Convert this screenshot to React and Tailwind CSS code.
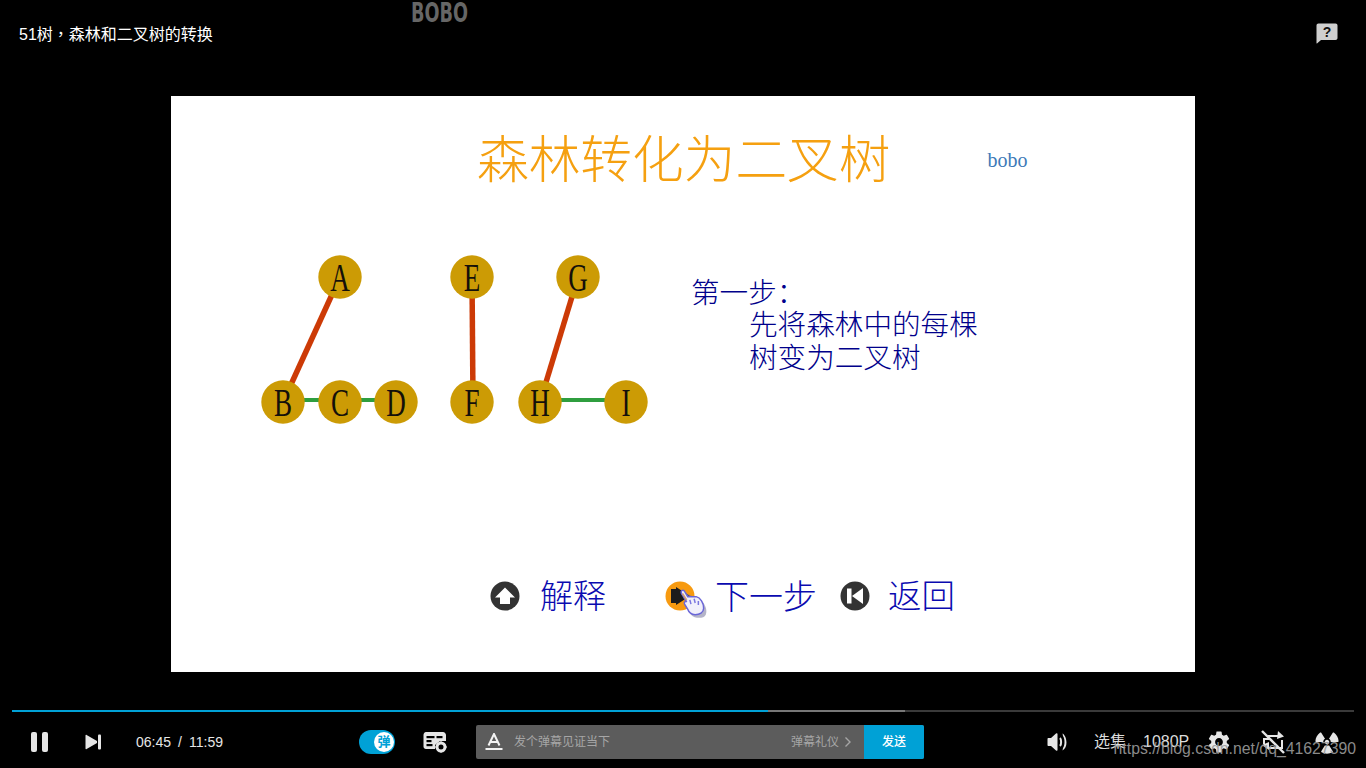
import React from "react";
import { FaRadiation } from "react-icons/fa";
import { MdSettings } from "react-icons/md";

const nodes = [
  { label: "A", x: 90, y: 27 },
  { label: "B", x: 33, y: 152 },
  { label: "C", x: 90, y: 152 },
  { label: "D", x: 146, y: 152 },
  { label: "E", x: 222, y: 27 },
  { label: "F", x: 222, y: 152 },
  { label: "G", x: 328, y: 27 },
  { label: "H", x: 290, y: 152 },
  { label: "I", x: 376, y: 152 },
];

const TreeDiagram = () => (
  <svg width="400" height="180" className="shrink-0">
    <g stroke="#cc3a06" strokeWidth="5.5">
      <line x1="90" y1="27" x2="33" y2="152" />
      <line x1="222" y1="27" x2="223" y2="152" />
      <line x1="328" y1="27" x2="290" y2="152" />
    </g>
    <g stroke="#2f9e3f" strokeWidth="4">
      <line x1="33" y1="150" x2="146" y2="150" />
      <line x1="290" y1="150" x2="376" y2="150" />
    </g>
    {nodes.map((n) => (
      <g key={n.label}>
        <circle cx={n.x} cy={n.y} r="21.7" fill="#cc9b05" />
        <text
          transform={`translate(${n.x} ${n.y + 14}) scale(0.66 1)`}
          textAnchor="middle"
          fontSize="41"
          fontFamily="'Liberation Serif', serif"
          fill="#14100a"
        >
          {n.label}
        </text>
      </g>
    ))}
  </svg>
);

const UpButton = () => (
  <svg width="30" height="30" viewBox="0 0 30 30" className="shrink-0">
    <circle cx="15" cy="15" r="14.5" fill="#333" />
    <path d="M15 6.5 L25 16.5 H20 V23 H10 V16.5 H5 Z" fill="#fff" />
  </svg>
);

const BackButton = () => (
  <svg width="30" height="30" viewBox="0 0 30 30" className="shrink-0">
    <circle cx="15" cy="15" r="14.5" fill="#333" />
    <rect x="7" y="7.5" width="4.5" height="15" fill="#fff" />
    <path d="M23 7 V23 L12 15 Z" fill="#fff" />
  </svg>
);

// orange play button with the hand cursor lying over it
const NextButton = () => (
  <div className="relative w-[30px] h-[30px] shrink-0">
    <svg width="30" height="30" viewBox="0 0 30 30">
      <circle cx="15" cy="15" r="14.5" fill="#f79a10" />
      <rect x="6" y="8" width="6" height="14" fill="#1c1c1c" />
      <path d="M11 6 L25 15 L11 24 Z" fill="#1c1c1c" />
    </svg>
    <svg width="36" height="36" viewBox="0 0 34 34" className="absolute left-[9px] top-[4px]">
      <path
        d="M9 12 C10 15 13 24 16 28 C20 32 28 32 30 28 C32 24 29 17 25 14 L14 9 C11 8 8 9 9 12 Z"
        fill="#77779a"
        opacity="0.55"
      />
      <path
        d="M7 8 C6 5 9 4 10 6 L13 11 L21 11 C25 12 28 17 28 22 C28 26 24 28 20 28 C16 28 14 26 13 23 L10 18 C9 16 11 15 12 16 Z"
        fill="#f1f0fb"
        stroke="#6a66d8"
        strokeWidth="1.4"
      />
      <path d="M15 14 L16 18 M19 13 L20 17 M23 15 L23 19" stroke="#7a76e0" strokeWidth="1.4" />
      <path d="M8 8 L12 14" stroke="#d9a070" strokeWidth="1.5" />
    </svg>
  </div>
);

const NextTrackIcon = () => (
  <svg width="16" height="16" viewBox="0 0 16 16">
    <path d="M0.5 1.5 C0.5 0.8 1 0.6 1.6 1 L12 7 V9 L1.6 15 C1 15.4 0.5 15.2 0.5 14.5 Z" fill="#e6e6e6" />
    <rect x="13" y="0.5" width="3" height="15" rx="1" fill="#e6e6e6" />
  </svg>
);

const DanmakuSettingIcon = () => (
  <svg width="25" height="22" viewBox="0 0 25 22">
    <path
      d="M3 1 H20 C21.5 1 23 2.5 23 4 V10 H17 L12 14 V18 H3 C1.5 18 0.5 17 0.5 15.5 V4 C0.5 2.5 1.5 1 3 1 Z"
      fill="#e6e6e6"
    />
    <g fill="#000">
      <rect x="3.5" y="5" width="8" height="2.2" />
      <rect x="3.5" y="9" width="5" height="2.2" />
      <rect x="3.5" y="13" width="6" height="2.2" />
      <rect x="13.5" y="5" width="6" height="2.2" />
    </g>
    <circle cx="18" cy="16" r="4" fill="none" stroke="#e6e6e6" strokeWidth="3" />
    <g stroke="#e6e6e6" strokeWidth="2">
      <line x1="18" y1="10.5" x2="18" y2="12.5" />
      <line x1="18" y1="19.5" x2="18" y2="21.5" />
      <line x1="12.5" y1="16" x2="14.5" y2="16" />
      <line x1="21.5" y1="16" x2="23.5" y2="16" />
    </g>
  </svg>
);

const VolumeIcon = () => (
  <svg width="21" height="20" viewBox="0 0 21 20">
    <path d="M0.5 7 C0.5 6.4 1 6 1.5 6 H4 L9 1.5 C10 0.8 10.5 1.2 10.5 2 V18 C10.5 18.8 10 19.2 9 18.5 L4 14 H1.5 C1 14 0.5 13.6 0.5 13 Z" fill="#e6e6e6" />
    <path d="M13 6 C14.5 7.5 14.5 12.5 13 14" fill="none" stroke="#e6e6e6" strokeWidth="2" />
    <path d="M15.5 1.5 C20 4 21.5 15.5 15.5 18.5 L16 16 C18 13 18 7 16 4 Z" fill="#e6e6e6" />
  </svg>
);

const PipOffIcon = () => (
  <svg width="26" height="24" viewBox="0 0 26 24" fill="none" stroke="#e6e6e6" strokeWidth="2">
    <path d="M8 6 H19" />
    <path d="M18 1 L24 6.5 L17 9 Z" fill="#e6e6e6" stroke="none" />
    <path d="M22 10 V18 H8" />
    <path d="M4 14 V9 H9" />
    <path d="M9 20 L2 15 L9 12 Z" fill="#e6e6e6" stroke="none" />
    <line x1="2" y1="1" x2="24" y2="23" strokeWidth="2.4" />
  </svg>
);

const HelpIcon = () => (
  <svg width="22" height="21" viewBox="0 0 22 21">
    <path
      d="M2.5 0.5 H19.5 C20.7 0.5 21.5 1.3 21.5 2.5 V15 C21.5 16.2 20.7 17 19.5 17 H5 L1 20.5 C0.8 20.6 0.5 20.5 0.5 20 V2.5 C0.5 1.3 1.3 0.5 2.5 0.5 Z"
      fill="#cfcfcf"
    />
    <text x="11" y="14" textAnchor="middle" fontSize="14" fontWeight="700" fontFamily="'Liberation Sans', sans-serif" fill="#111">
      ?
    </text>
  </svg>
);

const App = () => {
  return (
    <div className="relative w-[1366px] h-[768px] overflow-hidden bg-black flex flex-col font-['Liberation_Sans','Noto_Sans_CJK_SC',sans-serif]">
      {/* top bar */}
      <div className="h-[96px] shrink-0 pl-[19px] pr-[28px] pt-[23px] flex justify-between items-start">
        <div className="text-white text-[16px] leading-[22px] -mt-[1px]">
          51树<span className="font-['Noto_Sans_CJK_TC',sans-serif]">，</span>森林和二叉树的转换
        </div>
        <HelpIcon />
      </div>
      <div className="absolute left-[411px] top-0 origin-left scale-x-[0.68] text-[#666] text-[26px] leading-[26px] font-bold font-['DejaVu_Sans',sans-serif]">
        BOBO
      </div>

      {/* slide */}
      <div className="w-[1024px] h-[576px] shrink-0 ml-[171px] bg-white flex flex-col font-['Liberation_Serif','Noto_Sans_CJK_SC',serif]">
        <div className="h-[154px] shrink-0 pl-[306px] pt-[35px] flex items-start">
          <div className="text-[51.7px] leading-[60px] font-light text-[#f5a010] whitespace-nowrap">森林转化为二叉树</div>
          <div className="ml-[97px] mt-[17px] text-[20px] leading-[24px] text-[#3d7ab8]">bobo</div>
        </div>

        <div className="h-[180px] shrink-0 pl-[79px] flex items-start">
          <TreeDiagram />
          <div className="ml-[41px] mt-[26px] text-[28.6px] leading-[33px] font-light text-[#00008b] whitespace-nowrap">
            <div className="pt-[1px] -mb-[1px]">第一步：</div>
            <div className="pl-[58px]">先将森林中的每棵</div>
            <div className="pl-[58px]">树变为二叉树</div>
          </div>
        </div>

        <div className="mt-[151px] h-[30px] pl-[319px] flex items-center text-[33px] font-light text-[#0a0ab0] whitespace-nowrap">
          <UpButton />
          <span className="ml-[20px] mt-[3px] w-[66px]">解释</span>
          <div className="ml-[59px]">
            <NextButton />
          </div>
          <span className="ml-[20px] mt-[3px] w-[102px] text-[34px]">下一步</span>
          <div className="ml-[23px]">
            <BackButton />
          </div>
          <span className="ml-[18px] mt-[3px] text-[33.5px]">返回</span>
        </div>
      </div>

      {/* progress */}
      <div className="mt-[38px] mx-[12px] h-[2px] shrink-0 flex bg-[#3a3a3a]">
        <div className="w-[756px] bg-[#00a1d6]" />
        <div className="w-[137px] bg-[#777]" />
      </div>

      {/* controls */}
      <div className="flex-1 pt-[4px] flex items-center text-[#e6e6e6]">
        <div className="ml-[31px] flex gap-[5px]">
          <div className="w-[6px] h-[20px] rounded-[2px] bg-[#e6e6e6]" />
          <div className="w-[6px] h-[20px] rounded-[2px] bg-[#e6e6e6]" />
        </div>
        <div className="ml-[37px] flex">
          <NextTrackIcon />
        </div>
        <div className="ml-[35px] w-[87px] flex justify-between text-[14px] whitespace-nowrap">
          <span>06:45</span>
          <span>/</span>
          <span>11:59</span>
        </div>
        <div className="ml-[136px] w-[36px] h-[24px] rounded-full bg-[#00a1d6] flex items-center justify-end pr-[1px]">
          <div className="w-[20px] h-[20px] rounded-full bg-white text-[#00a1d6] text-[13px] font-bold flex items-center justify-center">
            弹
          </div>
        </div>
        <div className="ml-[28px] flex">
          <DanmakuSettingIcon />
        </div>

        <div className="ml-[28px] w-[448px] h-[34px] rounded-[2px] overflow-hidden bg-[#5c5c5c] flex items-center">
          <svg width="18" height="18" viewBox="0 0 18 18" className="ml-[9px] shrink-0">
            <path d="M3.5 12.5 L9 1 L14.5 12.5 M5.5 9 H12.5" fill="none" stroke="#f2f2f2" strokeWidth="2" />
            <rect x="0.5" y="15" width="17" height="2" fill="#f2f2f2" />
          </svg>
          <span className="ml-[11px] text-[12px] text-[#a6a6a6]">发个弹幕见证当下</span>
          <span className="ml-auto text-[12px] text-[#a6a6a6]">弹幕礼仪</span>
          <svg width="8" height="12" viewBox="0 0 8 12" className="ml-[5px] mr-[12px] shrink-0">
            <path d="M1.5 1.5 L6 6 L1.5 10.5" fill="none" stroke="#a6a6a6" strokeWidth="1.4" />
          </svg>
          <div className="w-[60px] h-full shrink-0 bg-[#00a1d6] text-white text-[12px] font-medium flex items-center justify-center">
            发送
          </div>
        </div>

        <div className="ml-[123px] flex">
          <VolumeIcon />
        </div>
        <span className="ml-[26px] text-[16px] text-[#dcdcdc] whitespace-nowrap">选集</span>
        <span className="ml-[17px] text-[16px] text-[#dcdcdc] whitespace-nowrap">1080P</span>
        <MdSettings className="ml-[17px] shrink-0 text-[#e6e6e6]" size={26} />
        <div className="ml-[28px] flex">
          <PipOffIcon />
        </div>
        <FaRadiation className="ml-[29px] shrink-0 text-[#e6e6e6]" size={24} />
      </div>

      {/* csdn watermark */}
      <div className="absolute right-[10px] top-[738px] text-[15.8px] leading-[22px] text-[#9a9a9a] opacity-90 whitespace-nowrap">
        https://blog.csdn.net/qq_41627390
      </div>
    </div>
  );
};

export default App;
